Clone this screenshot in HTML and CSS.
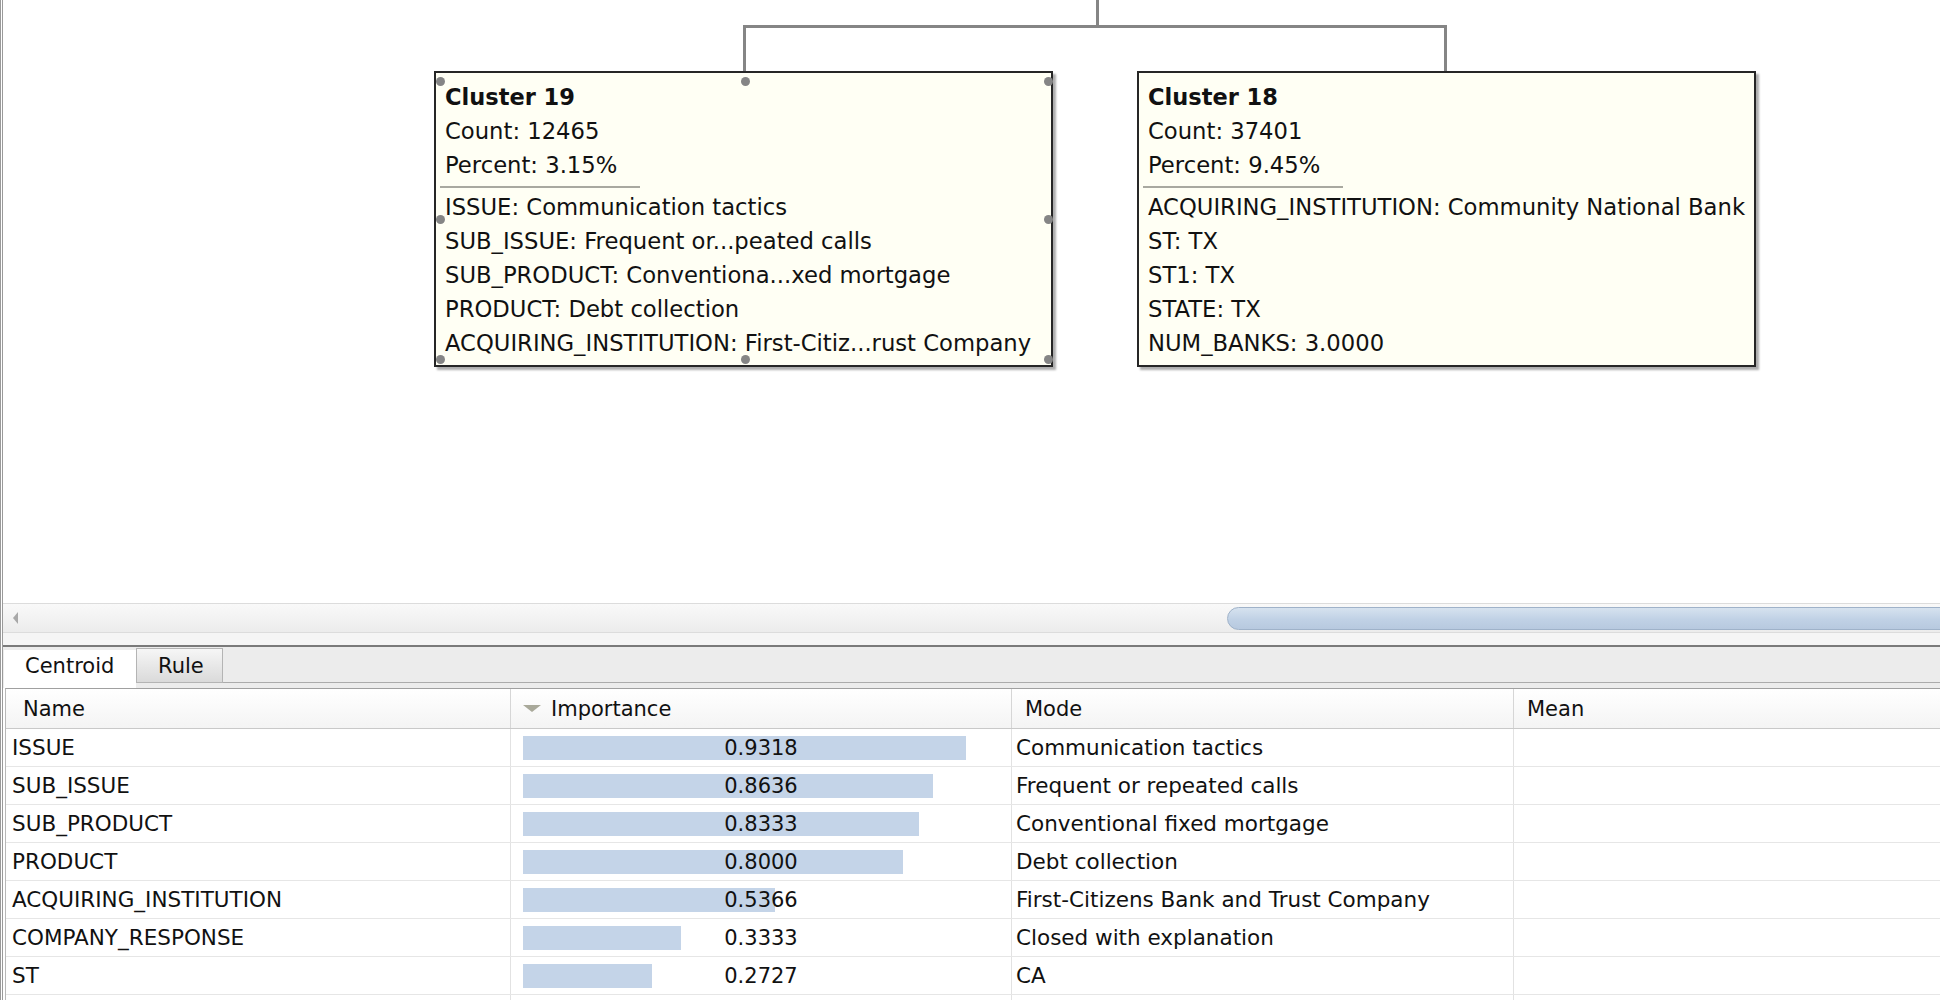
FILE: index.html
```html
<!DOCTYPE html>
<html>
<head>
<meta charset="utf-8">
<title>Cluster Viewer</title>
<link rel="stylesheet" href="styles.css">
</head>
<body>
<div class="app">
  <div class="canvas">
    <svg class="links" width="1940" height="603" viewBox="0 0 1940 603">
      <path d="M1097.5 0 V26.5 M744.5 71 V26.5 H1445.5 V71" fill="none" stroke="#858585" stroke-width="3"/>
    </svg>
    <div class="node node-19">
      <div class="title">Cluster 19</div>
      <div class="line">Count: 12465</div>
      <div class="line">Percent: 3.15%</div>
      <div class="sep"></div>
      <div class="line">ISSUE: Communication tactics</div>
      <div class="line">SUB_ISSUE: Frequent or...peated calls</div>
      <div class="line">SUB_PRODUCT: Conventiona...xed mortgage</div>
      <div class="line">PRODUCT: Debt collection</div>
      <div class="line">ACQUIRING_INSTITUTION: First-Citiz...rust Company</div>
      <span class="handle h-tl"></span><span class="handle h-tc"></span><span class="handle h-tr"></span>
      <span class="handle h-ml"></span><span class="handle h-mr"></span>
      <span class="handle h-bl"></span><span class="handle h-bc"></span><span class="handle h-br"></span>
    </div>
    <div class="node node-18">
      <div class="title">Cluster 18</div>
      <div class="line">Count: 37401</div>
      <div class="line">Percent: 9.45%</div>
      <div class="sep"></div>
      <div class="line">ACQUIRING_INSTITUTION: Community National Bank</div>
      <div class="line">ST: TX</div>
      <div class="line">ST1: TX</div>
      <div class="line">STATE: TX</div>
      <div class="line">NUM_BANKS: 3.0000</div>
    </div>
  </div>

  <div class="hscroll">
    <span class="arrow-left"></span>
    <span class="thumb"></span>
  </div>
  <div class="gap"></div>
  <div class="divider"></div>

  <div class="tabs">
    <div class="tab active">Centroid</div>
    <div class="tab">Rule</div>
    <div class="tab-rest"></div>
  </div>

  <div class="table">
    <div class="row head">
      <div class="cell">Name</div>
      <div class="cell sorted"><span class="sort-arrow"></span>Importance</div>
      <div class="cell">Mode</div>
      <div class="cell">Mean</div>
    </div>
    <div class="row">
      <div class="cell name">ISSUE</div>
      <div class="cell imp"><span class="bar" style="width:443px"></span><span class="val">0.9318</span></div>
      <div class="cell mode">Communication tactics</div>
      <div class="cell"></div>
    </div>
    <div class="row">
      <div class="cell name">SUB_ISSUE</div>
      <div class="cell imp"><span class="bar" style="width:410px"></span><span class="val">0.8636</span></div>
      <div class="cell mode">Frequent or repeated calls</div>
      <div class="cell"></div>
    </div>
    <div class="row">
      <div class="cell name">SUB_PRODUCT</div>
      <div class="cell imp"><span class="bar" style="width:396px"></span><span class="val">0.8333</span></div>
      <div class="cell mode">Conventional fixed mortgage</div>
      <div class="cell"></div>
    </div>
    <div class="row">
      <div class="cell name">PRODUCT</div>
      <div class="cell imp"><span class="bar" style="width:380px"></span><span class="val">0.8000</span></div>
      <div class="cell mode">Debt collection</div>
      <div class="cell"></div>
    </div>
    <div class="row">
      <div class="cell name">ACQUIRING_INSTITUTION</div>
      <div class="cell imp"><span class="bar" style="width:252px"></span><span class="val">0.5366</span></div>
      <div class="cell mode">First-Citizens Bank and Trust Company</div>
      <div class="cell"></div>
    </div>
    <div class="row">
      <div class="cell name">COMPANY_RESPONSE</div>
      <div class="cell imp"><span class="bar" style="width:158px"></span><span class="val">0.3333</span></div>
      <div class="cell mode">Closed with explanation</div>
      <div class="cell"></div>
    </div>
    <div class="row">
      <div class="cell name">ST</div>
      <div class="cell imp"><span class="bar" style="width:129px"></span><span class="val">0.2727</span></div>
      <div class="cell mode">CA</div>
      <div class="cell"></div>
    </div>
    <div class="row">
      <div class="cell name"></div>
      <div class="cell imp"></div>
      <div class="cell mode"></div>
      <div class="cell"></div>
    </div>
  </div>
</div>
</body>
</html>
```

FILE: styles.css
```css
* { box-sizing: border-box; }

html, body {
  margin: 0;
  padding: 0;
  background: #ffffff;
}

body {
  width: 1940px;
  height: 1000px;
  overflow: hidden;
  font-family: "DejaVu Sans", "Liberation Sans", sans-serif;
  color: #111;
}

.app {
  width: 1940px;
  height: 1000px;
  border-left: 3px double #9a9a9a;
  overflow: hidden;
}

/* ---------- diagram canvas ---------- */
.canvas {
  position: relative;
  height: 603px;
  background: #fff;
}

.links {
  position: absolute;
  left: -3px;
  top: 0;
}

.node {
  position: absolute;
  top: 71px;
  width: 619px;
  height: 296px;
  padding: 7px 0 0 9px;
  background: #fffff4;
  border: 2px solid #262626;
  box-shadow: 3px 3px 2px rgba(0, 0, 0, 0.32);
  font-size: 22.7px;
  white-space: nowrap;
  overflow: visible;
}

.node-19 { left: 431px; }
.node-18 { left: 1134px; }

.title {
  font-weight: bold;
  font-size: 22.5px;
  line-height: 34px;
  height: 34px;
}

.line {
  line-height: 34px;
  height: 34px;
}

.sep {
  width: 200px;
  height: 2px;
  margin: 4px 0 2px -5px;
  background: #a9a9a0;
}

.handle {
  position: absolute;
  width: 9px;
  height: 9px;
  border-radius: 50%;
  background: #858585;
}
.h-tl { left: 0px;   top: 4px; }
.h-tc { left: 305px; top: 4px; }
.h-tr { left: 608px; top: 4px; }
.h-ml { left: 0px;   top: 142px; }
.h-mr { left: 608px; top: 142px; }
.h-bl { left: 0px;   top: 282px; }
.h-bc { left: 305px; top: 282px; }
.h-br { left: 608px; top: 282px; }

/* ---------- horizontal scrollbar ---------- */
.hscroll {
  height: 30px;
  display: flex;
  align-items: center;
  border-top: 1px solid #dcdcdc;
  border-bottom: 1px solid #dcdcdc;
  background: linear-gradient(#f9f9f9, #ececec);
  overflow: hidden;
}

.arrow-left {
  width: 0;
  height: 0;
  margin-left: 10px;
  border-top: 6px solid transparent;
  border-bottom: 6px solid transparent;
  border-right: 5px solid #a8a8a8;
}

.thumb {
  flex: 0 0 733px;
  height: 23px;
  margin-left: auto;
  margin-right: -20px;
  border: 1px solid #9fb2c9;
  border-radius: 12px 0 0 12px;
  background: linear-gradient(#d6e2ef, #c0d1e5 55%, #b7c9df);
}

.gap {
  height: 12px;
  background: #f5f5f5;
}

.divider {
  height: 2px;
  background: #7a7a7a;
}

/* ---------- tabs ---------- */
.tabs {
  height: 41px;
  display: flex;
  align-items: flex-end;
  background: #ececec;
  padding-left: 1px;
  font-size: 21px;
}

.tab {
  height: 35px;
  margin-bottom: 5px;
  padding: 0 18px 0 21px;
  display: flex;
  align-items: center;
  border: 1px solid #b4b4b4;
  background: linear-gradient(#f6f6f6, #dadada);
}

.tab.active {
  width: 132px;
  height: 38px;
  margin-bottom: 0;
  padding-bottom: 6px;
  border: none;
  background: #ffffff;
}

.tab-rest {
  flex: 1;
  align-self: flex-end;
  height: 1px;
  margin-bottom: 5px;
  background: #ababab;
}

/* ---------- table ---------- */
.table {
  margin-left: 2px;
  border-top: 1px solid #a0a0a0;
  border-left: 1px solid #b8b8b8;
  background: #fff;
  font-size: 21.5px;
}

.row {
  display: grid;
  grid-template-columns: 505px 501px 502px 502px;
  height: 38px;
  border-bottom: 1px solid #e6e6e6;
}

.row.head {
  height: 40px;
  border-bottom: 1px solid #c9c9c9;
  background: linear-gradient(#ffffff, #f4f4f4);
  font-size: 21px;
}

.cell {
  display: flex;
  align-items: center;
  border-right: 1px solid #e2e2e2;
  white-space: nowrap;
  overflow: hidden;
}

.head .cell {
  padding-left: 13px;
  border-right-color: #d6d6d6;
}
.head .cell:first-child { padding-left: 17px; }
.head .cell.sorted { padding-left: 12px; }

.sort-arrow {
  width: 0;
  height: 0;
  margin-right: 10px;
  border-left: 9px solid transparent;
  border-right: 9px solid transparent;
  border-top: 7px solid #a9a99a;
}

.cell.name { padding-left: 6px; }
.cell.mode { padding-left: 4px; }

.cell.imp {
  display: grid;
  align-items: center;
  font-size: 21px;
}

.bar {
  grid-area: 1 / 1;
  justify-self: start;
  height: 24px;
  margin-left: 12px;
  background: #c4d4e8;
}

.val {
  grid-area: 1 / 1;
  justify-self: center;
}
```
